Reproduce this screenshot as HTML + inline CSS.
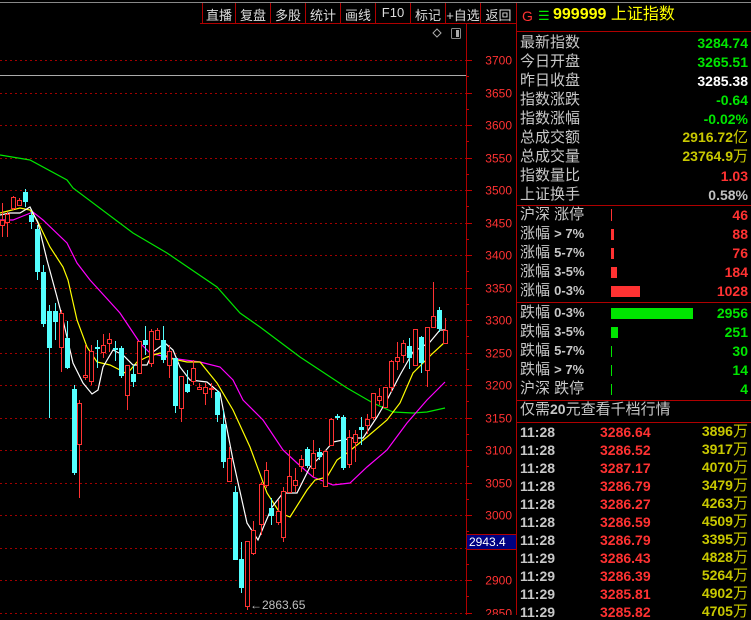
<!DOCTYPE html>
<html><head><meta charset="utf-8"><style>
*{margin:0;padding:0;box-sizing:border-box}
body{width:751px;height:615px;background:#000;overflow:hidden;position:relative;font-family:"Liberation Sans","Noto Sans CJK SC",sans-serif}
.t{position:absolute;white-space:nowrap;line-height:1}
.btn{position:absolute;top:5px;font-size:13px;color:#ddd;text-align:center}
.l{position:absolute;left:520px;font-size:15px;color:#c8c8c8;white-space:nowrap;line-height:1}
.v{position:absolute;right:3px;font-size:14px;font-weight:bold;white-space:nowrap;line-height:1}
.hl{position:absolute;left:517px;width:234px;height:1px;background:#b00000}
</style></head><body>
<div style="position:absolute;left:0;top:2px;width:751px;height:1px;background:#888"></div>
<div style="position:absolute;left:200px;top:23px;width:317px;height:1px;background:#b00000"></div>
<svg width="751" height="615" style="position:absolute;left:0;top:0">
<g stroke="#b00000" stroke-width="1">
<line x1="202.5" y1="3" x2="202.5" y2="23"/><line x1="235.5" y1="3" x2="235.5" y2="23"/><line x1="270.5" y1="3" x2="270.5" y2="23"/><line x1="305.5" y1="3" x2="305.5" y2="23"/><line x1="340.5" y1="3" x2="340.5" y2="23"/><line x1="375.5" y1="3" x2="375.5" y2="23"/><line x1="410.5" y1="3" x2="410.5" y2="23"/><line x1="445.5" y1="3" x2="445.5" y2="23"/><line x1="480.5" y1="3" x2="480.5" y2="23"/>
<line x1="466.5" y1="23" x2="466.5" y2="615"/>
<line x1="516.5" y1="3" x2="516.5" y2="615"/>
</g>
<line x1="0" y1="75.5" x2="466" y2="75.5" stroke="#aaa"/>
<g id="grid" stroke="#a00000" stroke-dasharray="2,3"></g>
<g id="ticks" stroke="#c00000"></g>
<g id="lab" fill="#ff3232" font-size="12" font-family="Liberation Sans" text-anchor="end"></g>
<path d="M437 29 L441 33 L437 37 L433 33 Z" fill="none" stroke="#aaa"/>
<rect x="451.5" y="28.5" width="9" height="10" fill="none" stroke="#888" rx="1"/><rect x="456" y="30" width="3" height="7" fill="#aaa"/>
<g id="ma" fill="none" stroke-width="1.2">
<polyline stroke="#00e600" points="0,155 30,160 67,180 73,188 133,233 167,253 217,287 240,313 260,327 300,357 347,388 373,403 393,412 413,413 427,412 445,408" />
<polyline stroke="#ff00ff" points="0,220 13,220 33,212 43,220 67,243 77,263 90,280 120,313 140,343 150,353 170,358 200,362 220,367 233,380 243,400 263,420 283,450 297,463 313,477 333,485 350,483 367,467 387,450 407,423 427,400 445,382"/>
<polyline stroke="#ffff00" points="0,213 20,208 30,210 37,220 50,247 63,267 68,280 77,320 87,347 97,362 110,365 120,370 127,374 137,362 147,357 160,353 173,359 187,362 200,362 217,383 233,410 250,447 267,493 280,513 290,517 307,490 315,480 327,477 337,460 347,453 367,437 387,420 400,403 413,373 433,353 445,342"/>
<polyline stroke="#ffffff" points="0,215 10,213 20,213 30,207 38,223 47,260 57,297 63,320 73,363 83,383 92,394 98,390 103,367 113,350 123,355 133,365 147,365 153,352 165,343 173,350 180,367 190,380 207,382 220,393 233,460 247,523 258,540 272,507 283,493 297,493 310,467 320,457 333,442 343,440 353,438 363,438 377,417 387,400 400,375 413,352 430,342 440,330 445,330"/>
</g>
<g id="cd"></g>
<text x="250" y="609" fill="#c0c0c0" font-size="12" font-family="Liberation Sans">←2863.65</text>
<rect x="466.5" y="534.5" width="50" height="15" fill="#000080" stroke="#b00000"/>
<text x="469" y="546" fill="#fff" font-size="12" font-family="Liberation Sans">2943.4</text>
</svg>
<div class="btn" style="left:203px;width:32px">直播</div>
<div class="btn" style="left:236px;width:34px">复盘</div>
<div class="btn" style="left:271px;width:34px">多股</div>
<div class="btn" style="left:306px;width:34px">统计</div>
<div class="btn" style="left:341px;width:34px">画线</div>
<div class="btn" style="left:376px;width:34px">F10</div>
<div class="btn" style="left:411px;width:34px">标记</div>
<div class="btn" style="left:446px;width:34px">+自选</div>
<div class="btn" style="left:481px;width:35px">返回</div>

<div class="t" style="left:522px;top:9px;font-size:14px;color:#ff3232">G</div>
<div class="t" style="left:538px;top:9px;font-size:13px;color:#00e600">☰</div>
<div class="t" style="left:553px;top:7px;font-size:16px;color:#ffff00"><b>999999</b> 上证指数</div>
<div class="hl" style="top:31px"></div>
<div class="hl" style="top:205px"></div>
<div class="hl" style="top:302px"></div>
<div class="hl" style="top:400px"></div>
<div class="hl" style="top:422px"></div>

<div class="l" style="top:35px">最新指数</div><div class="v" style="top:36px;color:#00e600">3284.74</div>
<div class="l" style="top:54px">今日开盘</div><div class="v" style="top:55px;color:#00e600">3265.51</div>
<div class="l" style="top:73px">昨日收盘</div><div class="v" style="top:74px;color:#fff">3285.38</div>
<div class="l" style="top:92px">指数涨跌</div><div class="v" style="top:93px;color:#00e600">-0.64</div>
<div class="l" style="top:111px">指数涨幅</div><div class="v" style="top:112px;color:#00e600">-0.02%</div>
<div class="l" style="top:130px">总成交额</div><div class="v" style="top:130px;color:#c8c800">2916.72<span style="font-weight:normal;font-size:15px">亿</span></div>
<div class="l" style="top:149px">总成交量</div><div class="v" style="top:149px;color:#c8c800">23764.9<span style="font-weight:normal;font-size:15px">万</span></div>
<div class="l" style="top:168px">指数量比</div><div class="v" style="top:169px;color:#ff3232">1.03</div>
<div class="l" style="top:187px">上证换手</div><div class="v" style="top:188px;color:#c0c0c0">0.58%</div>

<div class="l" style="top:207px">沪深 涨停</div><div class="v" style="top:208px;color:#ff3232">46</div>
<div class="l" style="top:226px">涨幅 <b style="font-size:13px">&gt; 7%</b></div><div class="v" style="top:227px;color:#ff3232">88</div>
<div class="l" style="top:245px">涨幅 <b style="font-size:13px">5-7%</b></div><div class="v" style="top:246px;color:#ff3232">76</div>
<div class="l" style="top:264px">涨幅 <b style="font-size:13px">3-5%</b></div><div class="v" style="top:265px;color:#ff3232">184</div>
<div class="l" style="top:283px">涨幅 <b style="font-size:13px">0-3%</b></div><div class="v" style="top:284px;color:#ff3232">1028</div>
<div style="position:absolute;left:611px;top:209px;width:1px;height:12px;background:#ff3232"></div>
<div style="position:absolute;left:611px;top:229px;width:3px;height:11px;background:#ff3232"></div>
<div style="position:absolute;left:611px;top:248px;width:3px;height:11px;background:#ff3232"></div>
<div style="position:absolute;left:611px;top:267px;width:6px;height:11px;background:#ff3232"></div>
<div style="position:absolute;left:611px;top:286px;width:29px;height:11px;background:#ff3232"></div>

<div class="l" style="top:305px">跌幅 <b style="font-size:13px">0-3%</b></div><div class="v" style="top:306px;color:#00e600">2956</div>
<div class="l" style="top:324px">跌幅 <b style="font-size:13px">3-5%</b></div><div class="v" style="top:325px;color:#00e600">251</div>
<div class="l" style="top:343px">跌幅 <b style="font-size:13px">5-7%</b></div><div class="v" style="top:344px;color:#00e600">30</div>
<div class="l" style="top:362px">跌幅 <b style="font-size:13px">&gt; 7%</b></div><div class="v" style="top:363px;color:#00e600">14</div>
<div class="l" style="top:381px">沪深 跌停</div><div class="v" style="top:382px;color:#00e600">4</div>
<div style="position:absolute;left:611px;top:308px;width:82px;height:11px;background:#00e600"></div>
<div style="position:absolute;left:611px;top:327px;width:7px;height:11px;background:#00e600"></div>
<div style="position:absolute;left:611px;top:346px;width:1px;height:11px;background:#00e600"></div>
<div style="position:absolute;left:611px;top:365px;width:1px;height:11px;background:#00e600"></div>
<div style="position:absolute;left:611px;top:384px;width:1px;height:11px;background:#00e600"></div>
<div class="l" style="top:402px">仅需<b style="font-size:14px">20</b>元查看千档行情</div>
<div id="rows"></div>
<script>
var g=document.getElementById('grid'),tk=document.getElementById('ticks'),lb=document.getElementById('lab'),ns='http://www.w3.org/2000/svg';
function el(t,a,p){var e=document.createElementNS(ns,t);for(var k in a)e.setAttribute(k,a[k]);p.appendChild(e);return e}
for(var v=3700;v>=2850;v-=50){var y=Math.round(60+(3700-v)*0.65)+.5;
el('line',{x1:0,y1:y,x2:466,y2:y},g);el('line',{x1:466,y1:y,x2:472,y2:y},tk);
var y2=Math.round(60+(3725-v)*0.65)+.5;el('line',{x1:466,y1:y2,x2:469,y2:y2},tk);
if(v!=2950){var t=el('text',{x:512,y:y+4},lb);t.textContent=v;}}
var C="r 2 220 225 203 237|r 7 214 222 212 237|r 13 197 208 196 210|r 19 200 205 198 206|c 25 192 202 189 207|c 31 215 222 212 229|c 37 229 272 225 280|c 43 272 324 265 327|c 49 311 348 305 418|c 55 311 322 303 340|r 61 313 347 310 372|c 67 338 368 321 369|c 74 389 473 385 475|r 79 403 444 400 498|r 85 375 377 345 380|r 91 351 381 345 385|c 97 347 349 340 368|r 103 345 352 334 358|r 109 339 343 333 352|c 115 348 350 341 361|c 121 348 376 346 378|r 127 365 395 365 410|c 133 374 382 365 387|r 139 341 373 341 373|c 145 340 345 326 355|r 151 331 363 329 367|r 157 330 339 328 340|c 163 340 360 326 363|r 169 351 365 345 378|c 175 358 406 358 413|r 181 376 408 376 422|c 187 384 392 370 393|r 193 368 381 360 385|r 199 387 389 383 390|r 205 387 393 383 405|r 211 388 389 383 398|c 217 392 415 390 422|c 223 424 462 410 468|r 229 458 481 447 481|c 235 492 560 486 560|c 241 559 588 542 593|r 247 541 606 541 610|r 253 530 553 521 555|r 261 484 524 482 535|r 266 470 485 462 488|c 271 508 516 498 525|r 278 511 522 500 525|r 283 491 537 487 542|r 289 476 492 450 493|r 295 480 485 468 492|r 301 459 466 455 472|c 307 449 466 447 468|r 313 453 468 440 477|c 319 452 457 448 460|r 325 451 486 450 487|r 331 419 445 418 446|c 337 416 418 414 420|c 343 417 468 415 470|r 349 437 464 430 468|r 355 434 442 430 462|c 361 427 430 417 445|r 367 419 425 414 434|r 373 393 417 393 420|r 379 396 400 388 405|r 385 387 407 387 408|r 391 361 387 360 392|r 397 357 361 342 370|r 403 343 355 340 363|c 409 346 358 338 369|r 415 329 365 329 365|c 421 337 363 336 373|r 427 327 370 327 387|r 433 316 327 282 327|c 439 310 329 307 332|r 445 330 343 318 343";
var cd=document.getElementById('cd');
C.split('|').forEach(function(s){var a=s.split(' '),x=+a[1],o=+a[2],c=+a[3],h=+a[4],lo=+a[5];var col=a[0]=='r'?'#ff3232':'#54ffff';
el('line',{x1:x+.5,y1:h,x2:x+.5,y2:lo,stroke:col},cd);
if(a[0]=='r')el('rect',{x:x-1.5,y:o+.5,width:4,height:Math.max(c-o,1),fill:'#000',stroke:col},cd);
else el('rect',{x:x-2,y:o,width:5,height:Math.max(c-o,2),fill:col},cd);});
var R=[["11:28","3286.64","3896"],["11:28","3286.52","3917"],["11:28","3287.17","4070"],["11:28","3286.79","3479"],["11:28","3286.27","4263"],["11:28","3286.59","4509"],["11:28","3286.79","3395"],["11:29","3286.43","4828"],["11:29","3286.39","5264"],["11:29","3285.81","4902"],["11:29","3285.82","4705"]];
var h='';R.forEach(function(r,i){var y=425+i*18;
h+='<div class="t" style="left:520px;top:'+y+'px;font-size:14px;font-weight:bold;color:#c8c8c8">'+r[0]+'</div><div class="t" style="left:600px;top:'+y+'px;font-size:14px;font-weight:bold;color:#ff3232">'+r[1]+'</div><div class="t" style="right:3px;top:'+(y-1)+'px;font-size:14px;font-weight:bold;color:#c8c800">'+r[2]+'<span style="font-weight:normal;font-size:15px">万</span></div>';});
document.getElementById('rows').innerHTML=h;
</script>
</body></html>
